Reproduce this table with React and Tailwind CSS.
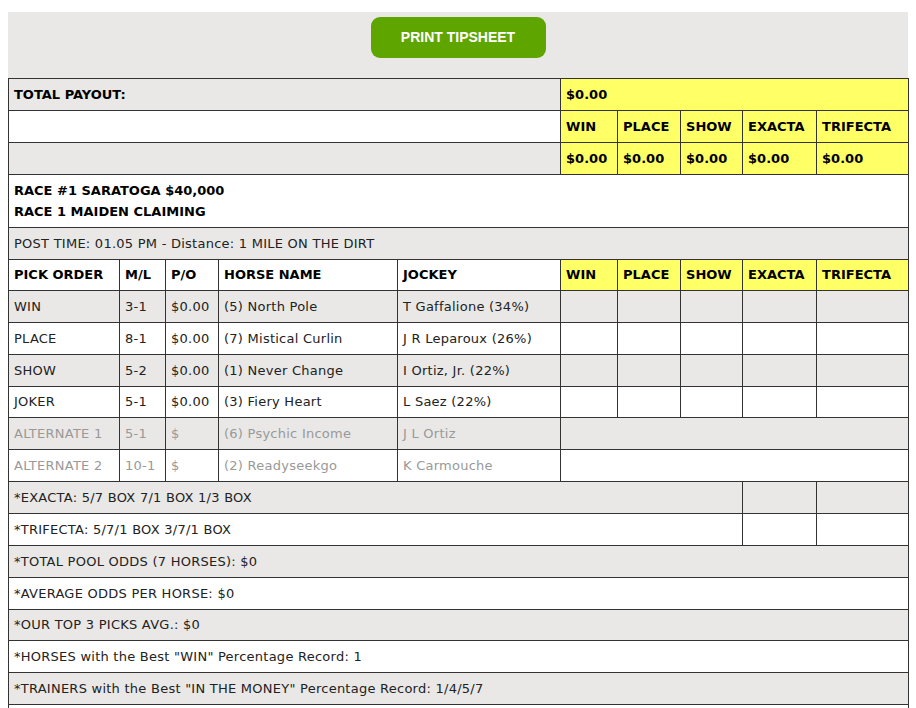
import React from "react";

const cell = "border border-[#333] px-[5px] py-0 text-left align-middle";
const yellow = "bg-[#ffff66]";

const picks = [
  { order: "WIN", ml: "3-1", po: "$0.00", horse: "(5) North Pole", jockey: "T Gaffalione (34%)", h: "h-[32px]" },
  { order: "PLACE", ml: "8-1", po: "$0.00", horse: "(7) Mistical Curlin", jockey: "J R Leparoux (26%)", h: "h-[32px]" },
  { order: "SHOW", ml: "5-2", po: "$0.00", horse: "(1) Never Change", jockey: "I Ortiz, Jr. (22%)", h: "h-[32px]" },
  { order: "JOKER", ml: "5-1", po: "$0.00", horse: "(3) Fiery Heart", jockey: "L Saez (22%)", h: "h-[31px]" },
];

const alternates = [
  { order: "ALTERNATE 1", ml: "5-1", po: "$", horse: "(6) Psychic Income", jockey: "J L Ortiz" },
  { order: "ALTERNATE 2", ml: "10-1", po: "$", horse: "(2) Readyseekgo", jockey: "K Carmouche" },
];

const notes = [
  ['*TOTAL POOL ODDS (7 HORSES): $0', "h-[32px]"],
  ['*AVERAGE ODDS PER HORSE: $0', "h-[32px]"],
  ['*OUR TOP 3 PICKS AVG.: $0', "h-[31px]"],
  ['*HORSES with the Best "WIN" Percentage Record: 1', "h-[32px]"],
  ['*TRAINERS with the Best "IN THE MONEY" Percentage Record: 1/4/5/7', "h-[32px]"],
];

const bets = ["WIN", "PLACE", "SHOW", "EXACTA", "TRIFECTA"];

const rowBg = (i) => (i % 2 === 0 ? "bg-[#e9e8e6]" : "bg-white");

const App = () => {
  return (
    <div className="min-h-screen bg-white px-[8px] pt-[12px] font-['Verdana','DejaVu_Sans',sans-serif] text-[13px] text-[#222] tracking-[0.25px]">
      <div className="w-[900px] bg-[#e9e8e6] h-[66px] flex justify-center pt-[5px]">
        <button className="h-[41px] w-[175px] rounded-[9px] bg-[#5fa500] text-white font-bold text-[14px] tracking-normal font-['Liberation_Sans',Arial,sans-serif]">
          PRINT TIPSHEET
        </button>
      </div>
      <table className="w-[900px] table-fixed border-collapse">
        <colgroup>
          <col className="w-[111px]" />
          <col className="w-[46px]" />
          <col className="w-[53px]" />
          <col className="w-[179px]" />
          <col className="w-[163px]" />
          <col className="w-[57px]" />
          <col className="w-[63px]" />
          <col className="w-[62px]" />
          <col className="w-[74px]" />
          <col className="w-[92px]" />
        </colgroup>
        <tbody>
          <tr className="h-[32px] bg-[#e9e8e6] font-bold text-black tracking-normal">
            <td colSpan={5} className={cell}>TOTAL PAYOUT:</td>
            <td colSpan={5} className={`${cell} ${yellow}`}>$0.00</td>
          </tr>
          <tr className="h-[32px] bg-white font-bold text-black tracking-normal">
            <td colSpan={5} className={cell}></td>
            {bets.map((b) => (
              <td key={b} className={`${cell} ${yellow}`}>{b}</td>
            ))}
          </tr>
          <tr className="h-[32px] bg-[#e9e8e6] font-bold text-black tracking-normal">
            <td colSpan={5} className={cell}></td>
            {bets.map((b) => (
              <td key={b} className={`${cell} ${yellow}`}>$0.00</td>
            ))}
          </tr>
          <tr className="h-[53px] bg-white font-bold text-black tracking-normal">
            <td colSpan={10} className={`${cell} leading-[21px]`}>
              <div>RACE #1 SARATOGA $40,000</div>
              <div>RACE 1 MAIDEN CLAIMING</div>
            </td>
          </tr>
          <tr className="h-[32px] bg-[#e9e8e6]">
            <td colSpan={10} className={cell}>POST TIME: 01.05 PM - Distance: 1 MILE ON THE DIRT</td>
          </tr>
          <tr className="h-[31px] bg-white font-bold text-black tracking-normal">
            <td className={cell}>PICK ORDER</td>
            <td className={cell}>M/L</td>
            <td className={cell}>P/O</td>
            <td className={cell}>HORSE NAME</td>
            <td className={cell}>JOCKEY</td>
            {bets.map((b) => (
              <td key={b} className={`${cell} ${yellow}`}>{b}</td>
            ))}
          </tr>
          {picks.map((p, i) => (
            <tr key={p.order} className={`${p.h} ${rowBg(i)}`}>
              <td className={cell}>{p.order}</td>
              <td className={cell}>{p.ml}</td>
              <td className={cell}>{p.po}</td>
              <td className={cell}>{p.horse}</td>
              <td className={cell}>{p.jockey}</td>
              {bets.map((b) => (
                <td key={b} className={cell}></td>
              ))}
            </tr>
          ))}
          {alternates.map((p, i) => (
            <tr key={p.order} className={`h-[32px] text-[#999] ${rowBg(i)}`}>
              <td className={cell}>{p.order}</td>
              <td className={cell}>{p.ml}</td>
              <td className={cell}>{p.po}</td>
              <td className={cell}>{p.horse}</td>
              <td className={cell}>{p.jockey}</td>
              <td colSpan={5} className={cell}></td>
            </tr>
          ))}
          <tr className="h-[32px] bg-[#e9e8e6]">
            <td colSpan={8} className={cell}>*EXACTA: 5/7 BOX 7/1 BOX 1/3 BOX</td>
            <td className={cell}></td>
            <td className={cell}></td>
          </tr>
          <tr className="h-[32px] bg-white">
            <td colSpan={8} className={cell}>*TRIFECTA: 5/7/1 BOX 3/7/1 BOX</td>
            <td className={cell}></td>
            <td className={cell}></td>
          </tr>
          {notes.map(([n, h], i) => (
            <tr key={n} className={`${h} ${rowBg(i)}`}>
              <td colSpan={10} className={cell}>{n}</td>
            </tr>
          ))}
          <tr className="h-[32px] bg-white">
            <td colSpan={10} className={cell}></td>
          </tr>
        </tbody>
      </table>
    </div>
  );
};

export default App;
